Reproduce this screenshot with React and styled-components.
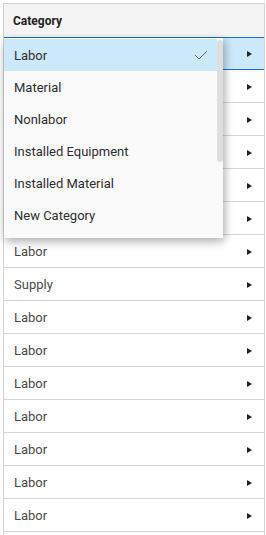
import React from "react";
import styled, { createGlobalStyle } from "styled-components";

const Global = createGlobalStyle`
  html, body { margin: 0; padding: 0; background: #fff; overflow: hidden; }
  body { font-family: Roboto, "Noto Sans", Arial, sans-serif; }
`;

const Page = styled.div`
  height: 535px;
  overflow: hidden;
`;

const Grid = styled.div`
  position: relative;
  margin: 3px 0 0 3px;
  width: 262px;
  box-sizing: border-box;
  border-left: 1px solid #d4d4d4;
  border-right: 1px solid #d4d4d4;
  border-top: 1px solid #d4d4d4;
`;

const Header = styled.div`
  height: 33px;
  display: flex;
  align-items: center;
  padding-left: 9px;
  background: #f3f3f3;
  font-size: 12px;
  font-weight: 700;
  color: #222;
`;

const Row = styled.div`
  height: 33px;
  box-sizing: border-box;
  display: flex;
  align-items: center;
  justify-content: space-between;
  padding: 1px 12px 0 10px;
  font-size: 13px;
  color: #4a4a4a;
  border-bottom: 1px solid #d6d6d6;
  background: ${(p) => (p.$selected ? "#cce8fb" : "#fff")};
  ${(p) =>
    p.$selected &&
    `
    border-top: 1px solid #1772d4;
    border-bottom: 1px solid #1772d4;
  `}
`;

const Arrow = styled.span`
  width: 0;
  height: 0;
  border-top: 3.5px solid transparent;
  border-bottom: 3.5px solid transparent;
  border-left: 5px solid #222;
`;

const Dropdown = styled.div`
  position: absolute;
  left: 0;
  top: 34px;
  width: 219px;
  height: 200px;
  background: #fafafa;
  box-shadow: 0 4px 10px rgba(0, 0, 0, 0.22), 3px 2px 7px rgba(0, 0, 0, 0.14);
  display: flex;
`;

const List = styled.div`
  flex: 1;
  padding-top: 1px;
`;

const Item = styled.div`
  height: 32px;
  display: flex;
  align-items: center;
  justify-content: space-between;
  padding: 0 9px 0 10px;
  font-size: 13px;
  color: #2f2f2f;
  background: ${(p) => (p.$active ? "#cce8fb" : "transparent")};
`;

const Track = styled.div`
  width: 6px;
  padding-top: 2px;
  background: #fafafa;
`;

const Thumb = styled.div`
  width: 6px;
  height: 122px;
  border-radius: 3px;
  background: #dedede;
`;

const Check = () => (
  <svg width="14" height="10" viewBox="0 0 14 10">
    <path d="M1 5 L5 9 L13 1" fill="none" stroke="#666" strokeWidth="1" />
  </svg>
);

const rows = [
  "Labor", "", "", "", "", "", "Labor", "Supply", "Labor", "Labor",
  "Labor", "Labor", "Labor", "Labor", "Labor", "",
];

const items = [
  "Labor",
  "Material",
  "Nonlabor",
  "Installed Equipment",
  "Installed Material",
  "New Category",
];

export default function App() {
  return (
    <Page>
      <Global />
      <Grid>
        <Header>Category</Header>
        {rows.map((r, i) => (
          <Row key={i} $selected={i === 0}>
            <span>{r}</span>
            <Arrow />
          </Row>
        ))}
        <Dropdown>
          <List>
            {items.map((it, i) => (
              <Item key={it} $active={i === 0}>
                <span>{it}</span>
                {i === 0 && <Check />}
              </Item>
            ))}
          </List>
          <Track>
            <Thumb />
          </Track>
        </Dropdown>
      </Grid>
    </Page>
  );
}
